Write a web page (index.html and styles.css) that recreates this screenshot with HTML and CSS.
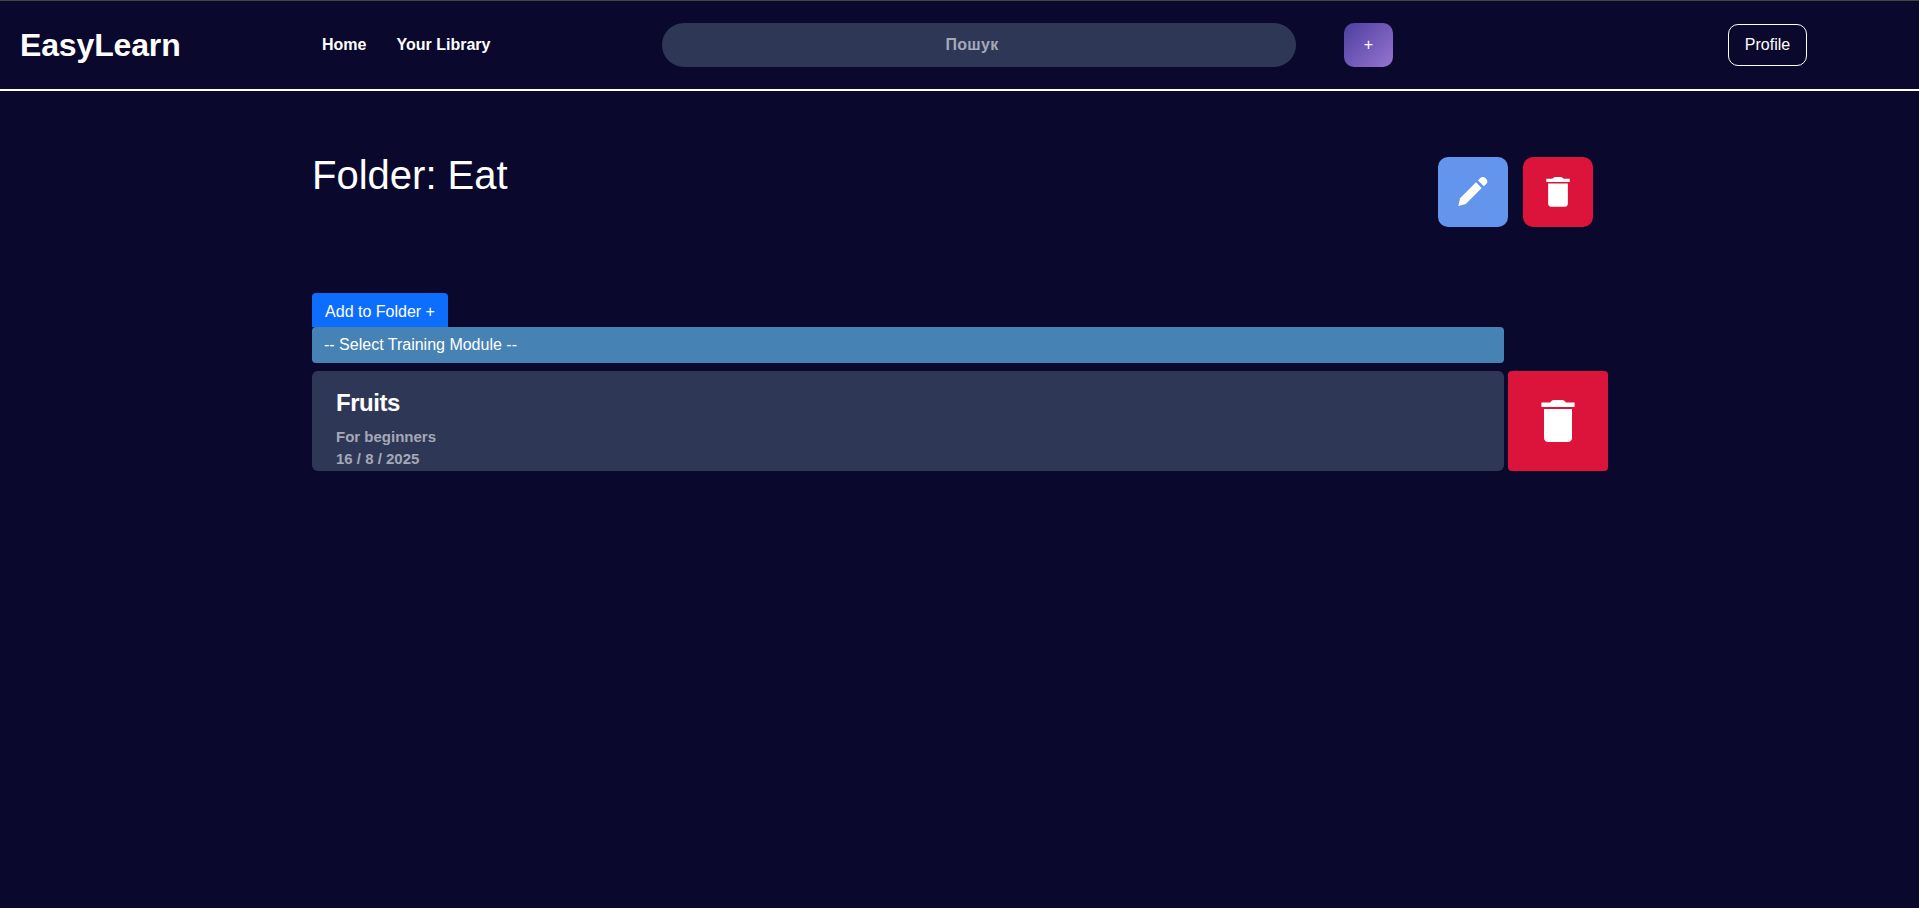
FILE: index.html
```html
<!DOCTYPE html>
<html lang="en">
<head>
<meta charset="utf-8">
<title>EasyLearn</title>
<link rel="stylesheet" href="styles.css">
</head>
<body>
<header class="header">
  <a class="logo">EasyLearn</a>
  <nav class="nav"><a>Home</a><a>Your Library</a></nav>
  <input class="search" type="text" placeholder="Пошук">
  <button class="create">+</button>
  <button class="profile">Profile</button>
</header>
<main class="main">
  <section class="folder-head">
    <h1 class="title">Folder: Eat</h1>
    <div class="actions">
      <button class="action edit" aria-label="Edit">
        <svg width="30" height="30" viewBox="0 0 30 30" fill="#fff"><path d="M.3 29 2.1 21.2 18 5.3 23.7 11 7.8 26.9Z"/><path d="M20 3.4 22.3 1.1C23.9-.3 26.1-.2 27.6 1.3L28.2 1.9C29.8 3.5 29.8 5.5 28.2 7.1L25.8 9.2Z"/></svg>
      </button>
      <button class="action remove" aria-label="Delete">
        <svg width="24" height="30" viewBox="0 0 34 42.4" fill="#fff"><use href="#trash"/></svg>
      </button>
    </div>
  </section>
  <button class="add">Add to Folder +</button>
  <div class="select">-- Select Training Module --</div>
  <div class="row">
    <article class="card">
      <h2 class="card-title">Fruits</h2>
      <p class="meta">For beginners</p>
      <p class="meta">16 / 8 / 2025</p>
    </article>
    <button class="row-remove" aria-label="Remove">
      <svg width="34" height="42" viewBox="0 0 34 42" fill="#fff"><g id="trash"><path d="M.4 2.4H9L11 .6Q11.8 0 13 0H21Q22.2 0 23 .6L25 2.4H33.6V7H.4Z"/><path d="M3 9H31V37.6Q31 42 26.6 42H7.4Q3 42 3 37.6Z"/></g></svg>
    </button>
  </div>
</main>
</body>
</html>
```
FILE: styles.css
```css
* { box-sizing: border-box; }
body {
  margin: 0;
  min-height: 100vh;
  background: #0a092d;
  color: #fff;
  font: 16px/24px "Liberation Sans", Arial, sans-serif;
}
button { border: 0; padding: 0; color: #fff; font: inherit; }
svg { display: block; }
.header {
  display: flex;
  align-items: center;
  height: 91px;
  padding-left: 20px;
  border-top: 1px solid #444;
  border-bottom: 2px solid #fff;
}
.logo { width: 302px; font-size: 32px; font-weight: 700; letter-spacing: -0.15px; }
.nav { display: flex; gap: 30px; width: 340px; font-weight: 700; }
.search {
  width: 634px;
  height: 44px;
  margin-right: 48px;
  padding: 0 16px 0 2px;
  border: 0;
  border-radius: 22px;
  background: #2e3856;
  color: #fff;
  font: 700 16px "Liberation Sans", Arial, sans-serif;
  letter-spacing: 0.3px;
  text-align: center;
}
.search::placeholder { color: #a5a8b8; opacity: 1; }
.create {
  width: 49px;
  height: 44px;
  padding-bottom: 1px;
  border-radius: 10px;
  background: linear-gradient(135deg, #4e3fa0, #9674cf);
  font-size: 16px;
}
.profile {
  width: 79px;
  height: 42px;
  margin-left: 335px;
  border: 1px solid #fff;
  border-radius: 10px;
  background: transparent;
}
.main { padding: 60px 0 0 312px; }
.folder-head {
  display: flex;
  justify-content: space-between;
  width: 1281px;
  height: 142px;
}
.title { margin: 0; font-size: 40px; line-height: 48px; font-weight: 400; }
.actions { display: flex; gap: 15px; padding-top: 6px; }
.action {
  display: flex;
  align-items: center;
  justify-content: center;
  width: 70px;
  height: 70px;
  padding: 0 1px 1px 0;
  border-radius: 10px;
}
.edit { background: #6495ed; }
.remove, .row-remove { background: #dc143c; }
.add {
  display: block;
  width: 136px;
  height: 34px;
  padding-top: 4px;
  border-radius: 4px 4px 0 0;
  background: #0d6efd;
}
.select {
  width: 1192px;
  height: 36px;
  padding: 6px 12px;
  border-radius: 4px;
  background: #4682b4;
}
.row { display: flex; gap: 4px; margin-top: 8px; }
.card {
  width: 1192px;
  height: 100px;
  padding: 16px 24px 0;
  border-radius: 6px;
  background: #2e3856;
}
.card-title { margin: 0 0 8px; font-size: 24px; line-height: 31px; letter-spacing: -0.45px; }
.meta { margin: 0; color: #a5a8b8; font-size: 15px; line-height: 22px; font-weight: 700; }
.row-remove {
  display: flex;
  align-items: center;
  justify-content: center;
  width: 100px;
  height: 100px;
  border-radius: 4px;
}
```
